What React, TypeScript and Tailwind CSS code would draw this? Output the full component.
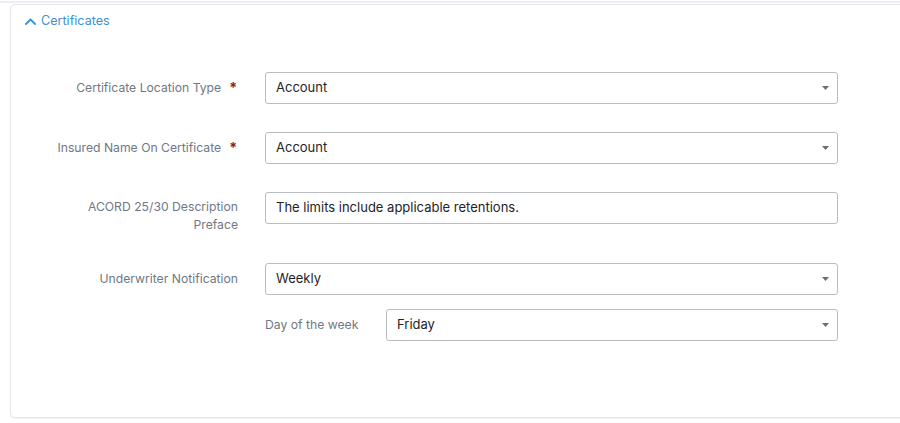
import React from "react";

function Caret() {
  return (
    <svg width="7" height="4" viewBox="0 0 7 4" className="shrink-0">
      <polygon points="0,0 7,0 3.5,4" fill="#6b6f75" />
    </svg>
  );
}

function SelectBox({ value, width }: { value: string; width: string }) {
  return (
    <div
      className={`${width} h-[32px] flex items-center justify-between pl-[10px] pr-[8px] border border-[#b9bcc0] rounded-[3px] bg-white text-[13px] text-[#1f2328]`}
    >
      <span>{value}</span>
      <Caret />
    </div>
  );
}

function FieldLabel({ text, required }: { text: React.ReactNode; required?: boolean }) {
  return (
    <div className="w-[227px] shrink-0 flex justify-end items-start text-right text-[12.2px] leading-[18px] text-[#717884]">
      <span>{text}</span>
      {required && (
        <span className="ml-[8px] mr-[1px] text-[#8a1c2c] font-bold text-[14px]">*</span>
      )}
    </div>
  );
}

export default function App() {
  return (
    <div className="w-[900px] h-[423px] bg-white overflow-hidden font-['Inter',sans-serif]">
      <div className="h-[2px] mt-[1px] bg-[#eceef2]" />
      <div className="ml-[10px] mt-[1px] w-[900px] h-[414px] border border-[#e3e6eb] rounded-[5px] shadow-[0_1px_2px_rgba(0,0,0,0.06)] bg-white">
        <div className="h-[30px] pt-[2px] flex items-center pl-[14px] gap-[5px] text-[12.6px] text-[#3b91d6]">
          <svg width="11" height="7" viewBox="0 0 11 7" fill="none">
            <polyline points="1,6 5.5,1.5 10,6" stroke="#3b91d6" strokeWidth="1.8" strokeLinecap="round" strokeLinejoin="round" />
          </svg>
          <span>Certificates</span>
        </div>

        <div className="mt-[37px] flex items-center gap-[27px]">
          <FieldLabel text="Certificate Location Type" required />
          <SelectBox value="Account" width="w-[573px]" />
        </div>

        <div className="mt-[28px] flex items-center gap-[27px]">
          <FieldLabel text="Insured Name On Certificate" required />
          <SelectBox value="Account" width="w-[573px]" />
        </div>

        <div className="mt-[28px] flex items-start gap-[27px]">
          <div className="pt-[6px]">
            <FieldLabel
              text={
                <>
                  ACORD 25/30 Description
                  <br />
                  Preface
                </>
              }
            />
          </div>
          <div className="w-[573px] h-[32px] flex items-center pl-[10px] border border-[#b9bcc0] rounded-[3px] text-[13px] text-[#1f2328]">
            The limits include applicable retentions.
          </div>
        </div>

        <div className="mt-[29px] flex items-center gap-[27px]">
          <FieldLabel text="Underwriter Notification" />
          <SelectBox value="Weekly" width="w-[573px]" />
        </div>

        <div className="mt-[14px] flex items-center">
          <div className="w-[254px] shrink-0" />
          <div className="w-[121px] shrink-0 text-[12.2px] text-[#717884]">Day of the week</div>
          <SelectBox value="Friday" width="w-[452px]" />
        </div>
      </div>
    </div>
  );
}
